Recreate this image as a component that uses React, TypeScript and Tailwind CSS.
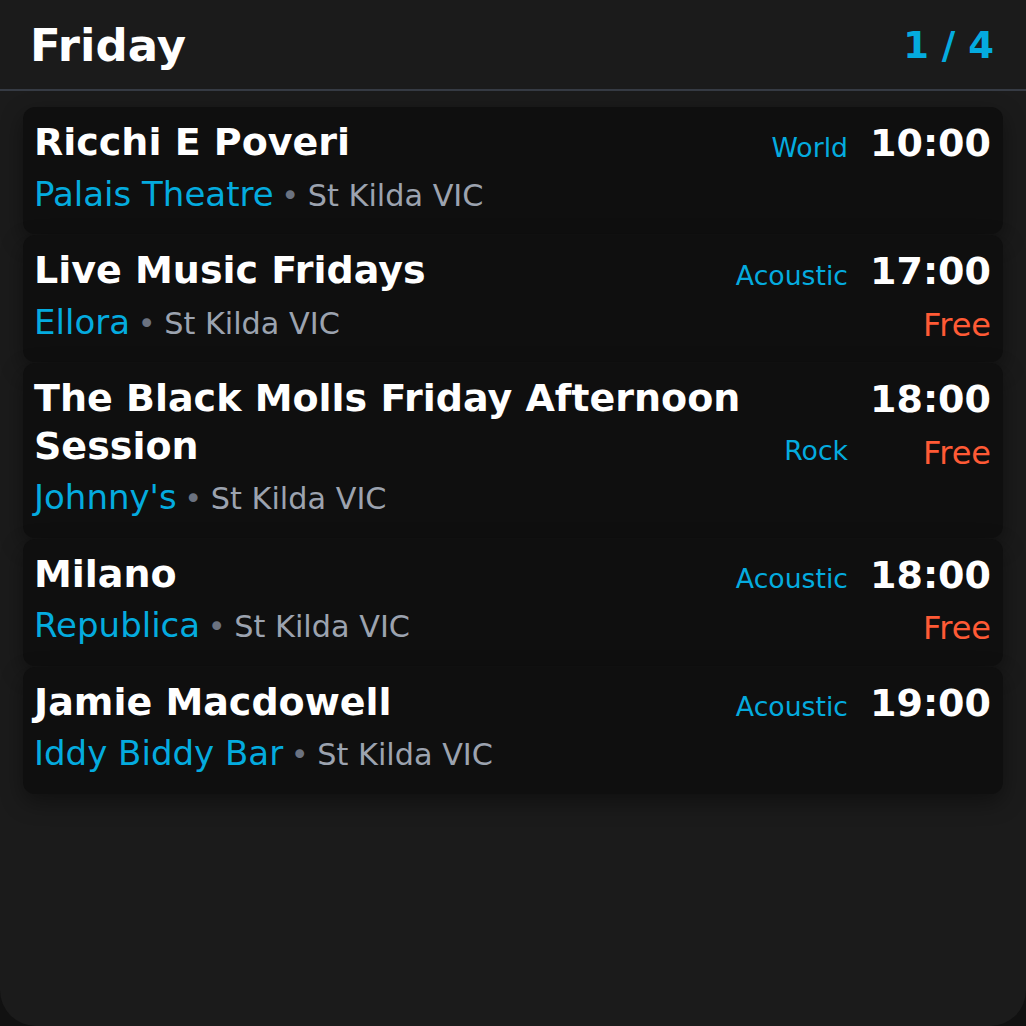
import React from "react";

type Gig = {
  title: string;
  tag: string;
  time: string;
  venue: string;
  free?: boolean;
};

const gigs: Gig[] = [
  { title: "Ricchi E Poveri", tag: "World", time: "10:00", venue: "Palais Theatre" },
  { title: "Live Music Fridays", tag: "Acoustic", time: "17:00", venue: "Ellora", free: true },
  {
    title: "The Black Molls Friday Afternoon Session",
    tag: "Rock",
    time: "18:00",
    venue: "Johnny's",
    free: true,
  },
  { title: "Milano", tag: "Acoustic", time: "18:00", venue: "Republica", free: true },
  { title: "Jamie Macdowell", tag: "Acoustic", time: "19:00", venue: "Iddy Biddy Bar" },
];

function Card({ g }: { g: Gig }) {
  return (
    <div className="relative flex items-start gap-[22px] rounded-[12px] bg-[#0f0f0f] pl-[11px] pr-[12px] pt-[12px] pb-[14.5px] shadow-[0_8px_22px_rgba(0,0,0,0.4)]">
      <div className="flex min-w-0 flex-1 flex-col">
        <div className="flex items-end gap-[20px]">
          <div className="min-w-0 flex-1 text-[38px] font-bold leading-[1.25] text-white">
            {g.title}
          </div>
          <div className="shrink-0 text-[26.7px] leading-[39px] text-[#04abdf]">{g.tag}</div>
        </div>
        <div className="mt-[2px] leading-[1.5]">
          <span className="text-[34px] text-[#04abdf]">{g.venue}</span>
          <span className="ml-[-2px] text-[30.3px] text-[#9ca3af]">
            {" "}
            <span className="text-[#6b7280]">•</span>
            <span className="ml-[-1px]"> St Kilda VIC</span>
          </span>
        </div>
      </div>
      <div className="flex shrink-0 flex-col items-end">
        <div className="text-[38px] font-bold leading-[1.3] text-white">{g.time}</div>
        {g.free && (
          <div className="mt-[8px] text-[32px] leading-[1.25] text-[#ff5a35]">Free</div>
        )}
      </div>
    </div>
  );
}

export default function App() {
  return (
    <div className="h-[1026px] w-full bg-[#111111]" style={{ fontFamily: "'DejaVu Sans', sans-serif" }}>
      <div className="flex h-full flex-col rounded-b-[36px] bg-[#1b1b1b]">
        <div className="flex items-center justify-between border-b-2 border-[#363b44] pl-[30px] pr-[32px] pt-[18px] pb-[15px]">
          <div className="text-[45px] font-bold leading-[1.25] text-white">Friday</div>
          <div className="text-[37px] font-bold leading-[1.25] text-[#04abdf]">1 / 4</div>
        </div>
        <div className="flex flex-col gap-[1px] px-[23px] pt-[16px]">
          {gigs.map((g, i) => (
            <Card key={i} g={g} />
          ))}
        </div>
      </div>
    </div>
  );
}
